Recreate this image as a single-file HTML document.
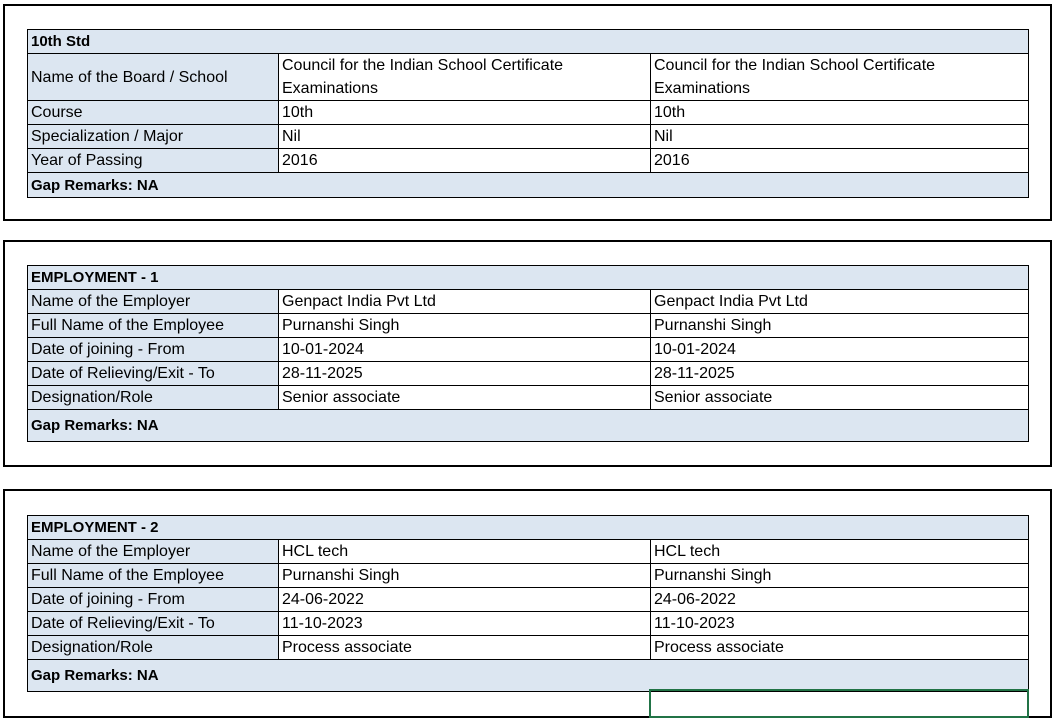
<!DOCTYPE html>
<html><head><meta charset="utf-8"><style>
body{margin:0;width:1058px;height:718px;background:#fff;position:relative;overflow:hidden;font-family:"Liberation Sans",sans-serif;font-size:16px;color:#000}
.box{position:absolute;left:3px;width:1049px;border:2px solid #000;box-sizing:border-box}
table{position:absolute;left:27px;border-collapse:collapse;width:1001px;table-layout:fixed}
td{border:1px solid #000;padding:1px 0 0 3px;height:22px;line-height:22px;white-space:nowrap;overflow:hidden;vertical-align:middle}
td.l{background:#dce6f1}
td.b{padding:0 0 0 3px;height:46px;line-height:23px}
tr.h td{background:#dce6f1;font-weight:bold;font-size:15px}
.sel{position:absolute;left:649px;top:689px;width:380px;height:29px;border:2px solid #217346;box-sizing:border-box}
</style></head><body>
<div class="box" style="top:4px;height:217px"></div>
<div class="box" style="top:240px;height:227px"></div>
<div class="box" style="top:489px;height:229px"></div>

<table style="top:29px">
<col style="width:251px"><col style="width:372px"><col style="width:378px">
<tr class="h"><td colspan="3">10th Std</td></tr>
<tr><td class="l b">Name of the Board / School</td><td class="b">Council for the Indian School Certificate<br>Examinations</td><td class="b">Council for the Indian School Certificate<br>Examinations</td></tr>
<tr><td class="l">Course</td><td>10th</td><td>10th</td></tr>
<tr><td class="l">Specialization / Major</td><td>Nil</td><td>Nil</td></tr>
<tr><td class="l">Year of Passing</td><td>2016</td><td>2016</td></tr>
<tr class="h"><td colspan="3" style="height:23px">Gap Remarks: NA</td></tr>
</table>

<table style="top:265px">
<col style="width:251px"><col style="width:372px"><col style="width:378px">
<tr class="h"><td colspan="3">EMPLOYMENT - 1</td></tr>
<tr><td class="l">Name of the Employer</td><td>Genpact India Pvt Ltd</td><td>Genpact India Pvt Ltd</td></tr>
<tr><td class="l">Full Name of the Employee</td><td>Purnanshi Singh</td><td>Purnanshi Singh</td></tr>
<tr><td class="l">Date of joining - From</td><td>10-01-2024</td><td>10-01-2024</td></tr>
<tr><td class="l">Date of Relieving/Exit - To</td><td>28-11-2025</td><td>28-11-2025</td></tr>
<tr><td class="l">Designation/Role</td><td>Senior associate</td><td>Senior associate</td></tr>
<tr class="h"><td colspan="3" style="height:30px">Gap Remarks: NA</td></tr>
</table>

<table style="top:515px">
<col style="width:251px"><col style="width:372px"><col style="width:378px">
<tr class="h"><td colspan="3">EMPLOYMENT - 2</td></tr>
<tr><td class="l">Name of the Employer</td><td>HCL tech</td><td>HCL tech</td></tr>
<tr><td class="l">Full Name of the Employee</td><td>Purnanshi Singh</td><td>Purnanshi Singh</td></tr>
<tr><td class="l">Date of joining - From</td><td>24-06-2022</td><td>24-06-2022</td></tr>
<tr><td class="l">Date of Relieving/Exit - To</td><td>11-10-2023</td><td>11-10-2023</td></tr>
<tr><td class="l">Designation/Role</td><td>Process associate</td><td>Process associate</td></tr>
<tr class="h"><td colspan="3" style="height:30px">Gap Remarks: NA</td></tr>
</table>
<div class="sel"></div>
</body></html>
